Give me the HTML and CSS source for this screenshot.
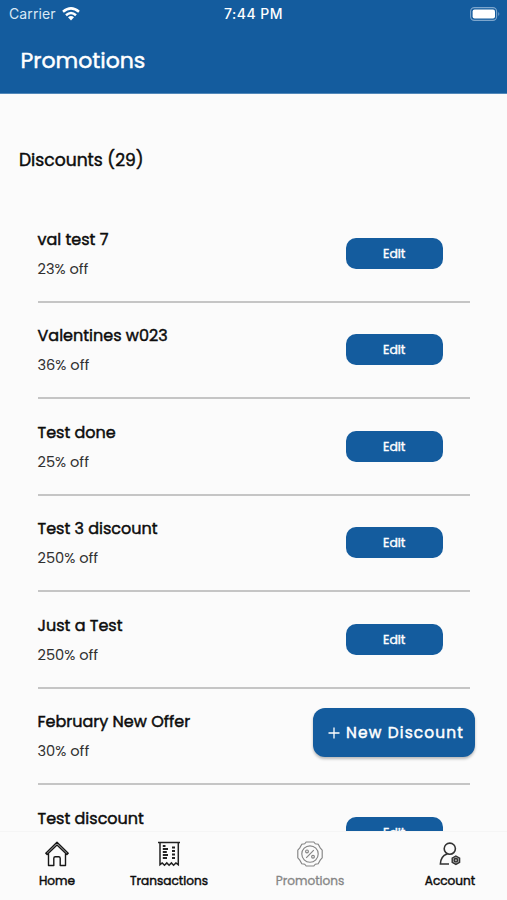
FILE: index.html
```html
<!DOCTYPE html>
<html lang="en">
<head>
<meta charset="utf-8">
<title>Promotions</title>
<link rel="stylesheet" href="styles.css">
</head>
<body>
<div class="app">
  <header class="header">
    <div class="status">
      <div class="carrier"><span>Carrier</span>
        <svg class="wifi" width="18" height="14" viewBox="0 0 18 14" fill="none" stroke="#fff" stroke-width="2.5"><path d="M1 4.8Q9-2 17 4.8M4 8.2Q9 3.8 14 8.2"/><path d="M6 10.2Q9 7.8 12 10.2L9 13.6Z" fill="#fff" stroke="none"/></svg>
      </div>
      <time class="clock">7:44 PM</time>
      <svg class="battery" width="31" height="14" viewBox="0 0 31 14"><rect x=".6" y=".6" width="26" height="12.8" rx="3.8" fill="none" stroke="#7da6cd" stroke-width="1.1"/><rect x="2.6" y="2.5" width="22.4" height="9" rx="2" fill="#fff"/><path d="M28.3 5Q30.3 7 28.3 9Z" fill="#7da6cd"/></svg>
    </div>
    <h1 class="title">Promotions</h1>
  </header>
  <main class="content">
    <h2 class="heading">Discounts (29)</h2>
    <ul class="list">
      <li class="row"><div><p class="name">val test 7</p><p class="off">23% off</p></div><button class="edit">Edit</button></li>
      <li class="row"><div><p class="name">Valentines w023</p><p class="off">36% off</p></div><button class="edit">Edit</button></li>
      <li class="row"><div><p class="name">Test done</p><p class="off">25% off</p></div><button class="edit">Edit</button></li>
      <li class="row"><div><p class="name">Test 3 discount</p><p class="off">250% off</p></div><button class="edit">Edit</button></li>
      <li class="row"><div><p class="name">Just a Test</p><p class="off">250% off</p></div><button class="edit">Edit</button></li>
      <li class="row"><div><p class="name">February New Offer</p><p class="off">30% off</p></div></li>
      <li class="row"><div><p class="name">Test discount</p><p class="off">&nbsp;</p></div><button class="edit">Edit</button></li>
    </ul>
  </main>
  <button class="fab"><svg width="12" height="12" viewBox="0 0 12 12" stroke="#fff" stroke-width="1.3"><path d="M6 .5v11M.5 6h11"/></svg><span>New Discount</span></button>
  <nav class="tabs">
    <a class="tab home"><svg width="26" height="28" viewBox="0 0 26 28" fill="none" stroke="#171717" stroke-width="1.4" stroke-linejoin="round" stroke-linecap="round"><path d="M1.8 13.3 13 2.3l11.2 11-1.3 1.3L13 5 3.1 14.6ZM4.5 14v11.5h5.3V18.3q0-1.5 1.5-1.5h3.4q1.5 0 1.5 1.5v7.2h5.3V14"/></svg><span>Home</span></a>
    <a class="tab transactions"><svg width="26" height="28" viewBox="0 0 26 28" fill="none" stroke="#222" stroke-width="1.5"><path d="M2 2.5h22M4 3v21.7l2.2-1.8 2.3 2.3 2.3-2.3 2.3 2.3 2.3-2.3 2.2 2.3 2.3-2.3 2.4 1.8V3"/><path d="M6.8 6h2.7M6.8 9H12M6.8 12h4M6.8 15H12M6.8 18h4.2M16 7.5h3M16 11h3M16 14.5h3M16 18h3" stroke-width="1.8"/></svg><span>Transactions</span></a>
    <a class="tab promotions"><svg width="28" height="28" viewBox="0 0 28 28" fill="none" stroke="#858585" stroke-width="1.15"><path d="M10.2 2h7.6l1.5 1.8 2.9.5 2 3.5 2 2.4v7.6l-2 2.4-2 3.5-2.9.5-1.5 1.8h-7.6l-1.5-1.8-2.9-.5-2-3.5-2-2.4v-7.6l2-2.4 2-3.5 2.9-.5Z"/><circle cx="14" cy="14" r="8.2"/><path d="m17.8 10.2-7.6 7.6"/><circle cx="11" cy="11.4" r="1.4"/><circle cx="17" cy="16.7" r="1.4"/></svg><span>Promotions</span></a>
    <a class="tab account"><svg width="26" height="28" viewBox="0 0 26 28" fill="none" stroke="#333" stroke-width="1.6"><circle cx="12.8" cy="8.7" r="5.6"/><path d="M10 14Q3.6 16.3 3.4 24H12"/><path d="m18.9 16 3.7 2.1v4.2l-3.7 2.1-3.7-2.1v-4.2Z" fill="#aaa" stroke-width="1.4"/><circle cx="18.9" cy="20.2" r="1.7" stroke-width="1.3"/></svg><span>Account</span></a>
  </nav>
</div>
</body>
</html>
```
FILE: styles.css
```css
* { box-sizing: border-box; margin: 0; padding: 0; }
body { background: #fbfbfb; color: #0c0c0c; font-family: Poppins, Inter, sans-serif; }
.app { position: relative; display: flex; flex-direction: column; height: 900px; overflow: hidden; }
button { border: 0; color: #fff; background: #145c9e; font-family: inherit; }
.header { flex: none; height: 94px; background: #145c9e; color: #fff; border-bottom: 1px solid #5288b9; }
.status { display: grid; grid-template-columns: 1fr auto 1fr; align-items: center; height: 27px; padding: 0 6px 0 9px; font-family: Inter, sans-serif; }
.carrier { display: flex; align-items: center; gap: 6px; font-size: 14px; color: #d9e8f5; letter-spacing: .12px; }
.clock { margin-left: -3px; font-size: 14px; font-weight: 500; letter-spacing: .45px; }
.battery { justify-self: end; }
.title, .heading, .name, .edit, .tab, .fab { font-weight: 400; -webkit-text-stroke: .45px currentColor; white-space: nowrap; }
.title { margin: 17px 0 0 20.5px; font-size: 22px; line-height: 34px; }
.content { flex: 1; min-height: 0; overflow: hidden; }
.heading { margin: 51px 0 31px 19px; height: 30px; font-size: 17.15px; line-height: 30px; }
.list { list-style: none; margin: 0 37px 0 37.5px; }
.row { display: flex; justify-content: space-between; align-items: center; height: 96.5px; padding-right: 27.5px; border-bottom: 2px solid #c5c5c5; }
.name { padding-top: 1px; font-size: 16px; line-height: 29px; }
.off { font-size: 14.6px; line-height: 29px; color: #303030; padding-top: 1px; margin-bottom: -1px; }
.edit { width: 96.5px; height: 31px; padding-top: 1px; border-radius: 10px; font-size: 12.4px; -webkit-text-stroke-width: .42px; }
.fab { position: absolute; left: 313px; top: 708px; width: 162px; height: 49px; border-radius: 12px; display: flex; align-items: center; gap: 6px; padding-left: 15px; font-size: 15.4px; letter-spacing: 1.15px; box-shadow: 0 2px 3px #0004; }
.tabs { flex: none; display: grid; grid-template-columns: 114px 110px 172px 108px; height: 69px; padding-top: 8px; background: #fbfbfb; border-top: 1px solid #f5f5f5; }
.tab { display: flex; flex-direction: column; align-items: center; gap: 3px; font-size: 12.1px; line-height: 20px; }
.tab svg { height: 28px; }
.promotions { color: #858585; -webkit-text-stroke-width: .3px; }
```
